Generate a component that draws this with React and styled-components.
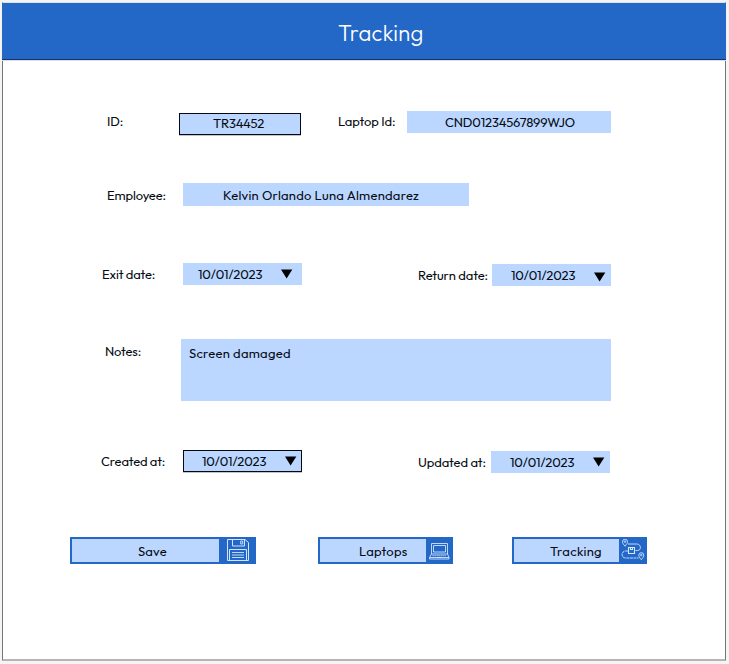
import React from 'react';
import styled, { createGlobalStyle } from 'styled-components';

const GlobalStyle = createGlobalStyle`
  *, *::before, *::after { box-sizing: border-box; }
  body {
    margin: 0;
    background: #f4f4f4;
    color: #060b14;
    font-family: "Outfit", "Lato", sans-serif;
    font-size: 13px;
    line-height: 20px;
  }
`;

const Page = styled.div`
  height: 664px;
  padding: 2px 3px 3px 2px;
`;

const Window = styled.main`
  height: 659px;
  background: #fff;
  border: 1px solid #757575;
  border-top-color: #dfe3ea;
  border-bottom: 2px solid #b5b5b5;
`;

const Header = styled.header`
  height: 57px;
  margin: 0 -1px;
  padding-left: 336px;
  display: flex;
  align-items: center;
  background: #2368c7;
  border-bottom: 1px solid #12376f;
  box-shadow: 0 1px 0 #dedede;
`;

const Title = styled.h1`
  margin: 3px 0 0;
  font-size: 22px;
  font-weight: 300;
  line-height: 28px;
  letter-spacing: 0.3px;
  color: #fff;
`;

const Form = styled.form`
  display: flex;
  flex-direction: column;
  padding-top: 51px;
`;

const Row = styled.div`
  display: flex;
  align-items: flex-start;
  height: ${(p) => p.$height}px;
  padding-left: ${(p) => p.$indent}px;
`;

const Label = styled.span`
  flex: none;
  width: ${(p) => p.$width}px;
  margin-top: ${(p) => p.$drop || 0}px;
  white-space: nowrap;
  letter-spacing: ${(p) => p.$tracking || 0}px;
`;

const Field = styled.div`
  flex: none;
  display: flex;
  align-items: center;
  width: ${(p) => p.$width}px;
  height: ${(p) => p.$height || 22}px;
  margin-top: ${(p) => p.$drop || 0}px;
  margin-right: ${(p) => p.$gap || 0}px;
  padding-left: ${(p) => p.$inset}px;
  padding-bottom: ${(p) => p.$lift || 0}px;
  white-space: nowrap;
  letter-spacing: ${(p) => p.$tracking || 0}px;
  background: #bbd7ff;
  box-shadow: ${(p) => (p.$outlined ? 'inset 0 0 0 1px #050a12, 0 1px 0 #c4c4c4' : 'none')};
`;

const DateText = styled.span`
  width: 83px;
  letter-spacing: -0.15px;
`;

const Caret = styled.svg`
  display: block;
  margin-top: ${(p) => p.$drop || 0}px;
`;

const NotesBox = styled.div`
  width: 430px;
  height: 62px;
  padding: 4px 8px;
  letter-spacing: 0.26px;
  background: #bbd7ff;
`;

const Actions = styled.div`
  display: flex;
  padding-left: 67px;
`;

const Action = styled.button`
  display: flex;
  width: ${(p) => p.$width}px;
  height: 27px;
  margin: 0 ${(p) => p.$gap || 0}px 0 0;
  padding: 0;
  border: 2px solid #2368c7;
  border-right: 0;
  background: #2368c7;
  color: inherit;
  font: inherit;
  text-align: left;
`;

const ActionText = styled.span`
  flex: 1;
  padding: 2px 0 0 ${(p) => p.$inset}px;
  letter-spacing: ${(p) => p.$tracking}px;
  background: #bbd7ff;
`;

const ActionIcon = styled.span`
  flex: none;
  display: flex;
  width: ${(p) => p.$width}px;
  color: #d3e4ff;
`;

function DateField({ inset, gap, drop, caretDrop, outlined }) {
  return (
    <Field $width={119} $inset={inset} $gap={gap} $drop={drop} $outlined={outlined}>
      <DateText>10/01/2023</DateText>
      <Caret $drop={caretDrop} width="12" height="10" viewBox="0 0 12 10">
        <path d="M0 .5h11.300L5.600 9.500Z" fill="#000" />
      </Caret>
    </Field>
  );
}

function SaveIcon() {
  return (
    <svg width="37" height="23" viewBox="0 0 37 23" fill="none" stroke="currentColor">
      <path d="M8.500.5H26l3.500 3v18h-21Z" />
      <path d="M13.500.5v6.500h12V.5" />
      <path d="M21.700 2h2v3h-2z" strokeWidth=".9" />
      <path d="M10.500 21.500v-11h17v11" />
      <path d="M13 13.500h12M13 16h12M13 18.500h12" strokeWidth=".9" />
    </svg>
  );
}

function LaptopIcon() {
  return (
    <svg width="27" height="23" viewBox="0 0 27 23" fill="none" stroke="currentColor" strokeWidth=".9">
      <path d="M5.500 15V4.500h16V15Z" />
      <path d="M7.500 13V6.500h12V13Z" />
      <path d="M5.500 15 3.500 18.500h19.500L21.500 15" />
      <path d="M3.500 18.500V20H23v-1.500" />
      <path d="M6.500 16.700h14" strokeDasharray="1.300 .7" />
      <path d="M11 18.500h5" />
    </svg>
  );
}

function RouteIcon() {
  return (
    <svg width="28" height="23" viewBox="0 0 28 23" fill="none" stroke="currentColor" strokeWidth=".9">
      <path d="M6 7.200C4.200 5 3.500 4.200 3.500 2.700a2.500 2.500 0 0 1 5 0c0 1.500-.7 2.300-2.500 4.500Z" />
      <circle cx="6" cy="2.600" r=".8" />
      <path d="M22.300 20.700c-1.800-2.200-2.500-3-2.500-4.500a2.500 2.500 0 0 1 5 0c0 1.500-.7 2.300-2.500 4.500Z" />
      <circle cx="22.300" cy="16.100" r=".8" />
      <path d="M9 5h8.500c5 0 5 6.500 1 6.500h-2" />
      <path d="M9 12H6.500c-4.500 0-4.500 7 0 7h13" strokeDasharray="3 .5" />
      <path d="M9.500 8.500h6v6h-6ZM11.500 8.500v2h2v-2" strokeWidth="1.100" />
    </svg>
  );
}

export default function App() {
  return (
    <>
      <GlobalStyle />
      <Page>
        <Window>
          <Header>
            <Title>Tracking</Title>
          </Header>
          <Form>
            <Row $height={72} $indent={104}>
              <Label $width={72} $tracking={-0.1}>ID:</Label>
              <Field $width={122} $drop={2} $inset={34} $gap={37} $lift={2} $tracking={-0.2} $outlined>
                TR34452
              </Field>
              <Label $width={69} $tracking={-0.1}>Laptop Id:</Label>
              <Field $width={204} $inset={38} $tracking={-0.16}>CND01234567899WJO</Field>
            </Row>
            <Row $height={80} $indent={104}>
              <Label $width={76} $drop={2} $tracking={-0.14}>Employee:</Label>
              <Field $width={286} $height={23} $inset={40} $tracking={0.24}>
                Kelvin Orlando Luna Almendarez
              </Field>
            </Row>
            <Row $height={76} $indent={99}>
              <Label $width={81} $drop={1} $tracking={-0.16}>Exit date:</Label>
              <DateField inset={15} gap={116} />
              <Label $width={74} $drop={2} $tracking={-0.12}>Return date:</Label>
              <DateField inset={19} drop={1} caretDrop={4} />
            </Row>
            <Row $height={111} $indent={102}>
              <Label $width={76} $drop={2} $tracking={-0.15}>Notes:</Label>
              <NotesBox>Screen damaged</NotesBox>
            </Row>
            <Row $height={87} $indent={98}>
              <Label $width={82} $drop={1} $tracking={-0.18}>Created at:</Label>
              <DateField inset={19} gap={116} outlined />
              <Label $width={73} $drop={2} $tracking={-0.12}>Updated at:</Label>
              <DateField inset={19} drop={1} />
            </Row>
            <Actions>
              <Action type="button" $width={186} $gap={62}>
                <ActionText $inset={66} $tracking={0.2}>Save</ActionText>
                <ActionIcon $width={37}><SaveIcon /></ActionIcon>
              </Action>
              <Action type="button" $width={135} $gap={59}>
                <ActionText $inset={39} $tracking={0.22}>Laptops</ActionText>
                <ActionIcon $width={27}><LaptopIcon /></ActionIcon>
              </Action>
              <Action type="button" $width={135}>
                <ActionText $inset={36} $tracking={0.3}>Tracking</ActionText>
                <ActionIcon $width={28}><RouteIcon /></ActionIcon>
              </Action>
            </Actions>
          </Form>
        </Window>
      </Page>
    </>
  );
}
